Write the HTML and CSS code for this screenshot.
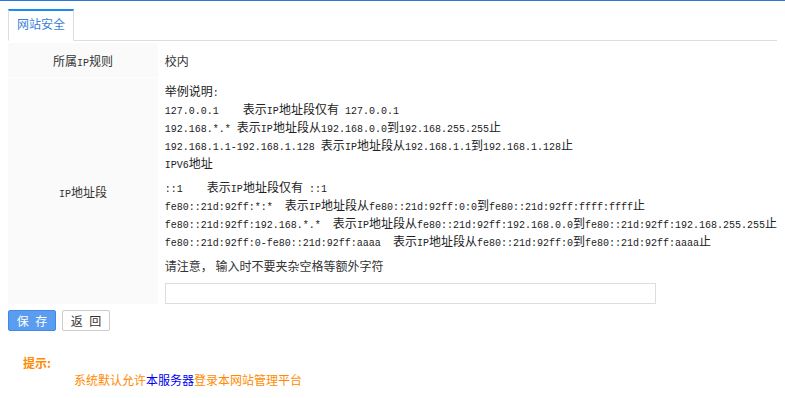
FILE: index.html
```html
<!DOCTYPE html>
<html lang="zh-CN">
<head>
    <meta charset="UTF-8">
    <title>网站安全</title>
    <link rel="stylesheet" href="styles.css">
</head>
<body>
    <div class="topbar"></div>
    <div class="page">
        <div class="tabs">
            <div class="tab">网站安全</div>
        </div>
        <table class="form-table">
            <tr class="row-rule">
                <td class="label">所属<span class="en">IP</span>规则</td>
                <td class="value">校内</td>
            </tr>
            <tr>
                <td class="label"><span class="en">IP</span>地址段</td>
                <td class="value">
                    <div class="example">
                        <div class="line">举例说明<span class="en">:</span></div>
                        <div class="line"><span class="en">127.0.0.1    </span>表示<span class="en">IP</span>地址段仅有<span class="en"> 127.0.0.1</span></div>
                        <div class="line"><span class="en">192.168.*.* </span>表示<span class="en">IP</span>地址段从<span class="en">192.168.0.0</span>到<span class="en">192.168.255.255</span>止</div>
                        <div class="line"><span class="en">192.168.1.1-192.168.1.128 </span>表示<span class="en">IP</span>地址段从<span class="en">192.168.1.1</span>到<span class="en">192.168.1.128</span>止</div>
                        <div class="line"><span class="en">IPV6</span>地址</div>
                    </div>
                    <div class="example v6">
                        <div class="line"><span class="en">::1    </span>表示<span class="en">IP</span>地址段仅有<span class="en"> ::1</span></div>
                        <div class="line"><span class="en">fe80::21d:92ff:*:*  </span>表示<span class="en">IP</span>地址段从<span class="en">fe80::21d:92ff:0:0</span>到<span class="en">fe80::21d:92ff:ffff:ffff</span>止</div>
                        <div class="line"><span class="en">fe80::21d:92ff:192.168.*.*  </span>表示<span class="en">IP</span>地址段从<span class="en">fe80::21d:92ff:192.168.0.0</span>到<span class="en">fe80::21d:92ff:192.168.255.255</span>止</div>
                        <div class="line"><span class="en">fe80::21d:92ff:0-fe80::21d:92ff:aaaa  </span>表示<span class="en">IP</span>地址段从<span class="en">fe80::21d:92ff:0</span>到<span class="en">fe80::21d:92ff:aaaa</span>止</div>
                    </div>
                    <p class="note">请注意，  输入时不要夹杂空格等额外字符</p>
                    <input type="text" class="ip-input">
                </td>
            </tr>
        </table>
        <div class="actions">
            <button type="button" class="btn btn-primary">保 存</button>
            <button type="button" class="btn">返 回</button>
        </div>
        <div class="tips">
            <div class="tips-title">提示:</div>
            <div class="tips-text">系统默认允许<span class="hl">本服务器</span>登录本网站管理平台</div>
        </div>
    </div>
</body>
</html>
```

FILE: styles.css
```css
body { margin: 0; font-family: "Noto Sans CJK SC", sans-serif; font-size: 12px; color: #333; background: #fff; }
.topbar { height: 1px; background: #2b79d7; }
.page { padding: 8px 8px 0; }

/* tab header */
.tabs { display: flex; border-bottom: 1px solid #ddd; }
.tab { height: 29px; line-height: 26px; padding: 0 8px; border: 1px solid #ddd; border-top: 2px solid #1a8cf0; border-bottom-color: #fff; margin-bottom: -1px; background: #fff; color: #3a7fd6; }

/* form table */
.form-table { width: 100%; margin-top: 2px; border-collapse: separate; border-spacing: 0; }
.form-table td { padding: 0; vertical-align: middle; }
.form-table .label { width: 150px; background: #fafafa; text-align: center; }
.row-rule td { height: 34px; border-bottom: 1px solid #fff; }
.form-table .value { padding-left: 7px; }
.form-table tr + tr .value { padding-top: 4px; vertical-align: top; }
.en { font-family: "Liberation Mono", monospace; font-size: 10px; }
.line { line-height: 18px; height: 18px; white-space: pre; color: #222; }
.v6 { margin-top: 6px; }
.note { margin: 7px 0 0; line-height: 18px; }
.ip-input { display: block; box-sizing: border-box; width: 491px; height: 21px; margin-top: 8px; border: 1px solid #ddd; padding: 0 4px; }

/* buttons */
.actions { display: flex; gap: 6px; margin-top: 6px; }
.btn { box-sizing: border-box; width: 48px; height: 21px; padding: 0 0 0 2px; border: 1px solid #ccc; border-radius: 2px; background: #fff; color: #333; font-family: "Noto Sans CJK SC", sans-serif; font-size: 12px; line-height: 19px; letter-spacing: 2px; white-space: pre; }
.btn-primary { background: #5a9cf0; border-color: #3f8ae6; color: #fff; }

/* tips */
.tips { margin-top: 23px; line-height: 17px; color: #ff8a00; }
.tips-title { padding-left: 15px; font-weight: bold; }
.tips-text { padding-left: 66px; }
.hl { color: #0000ee; }
```
